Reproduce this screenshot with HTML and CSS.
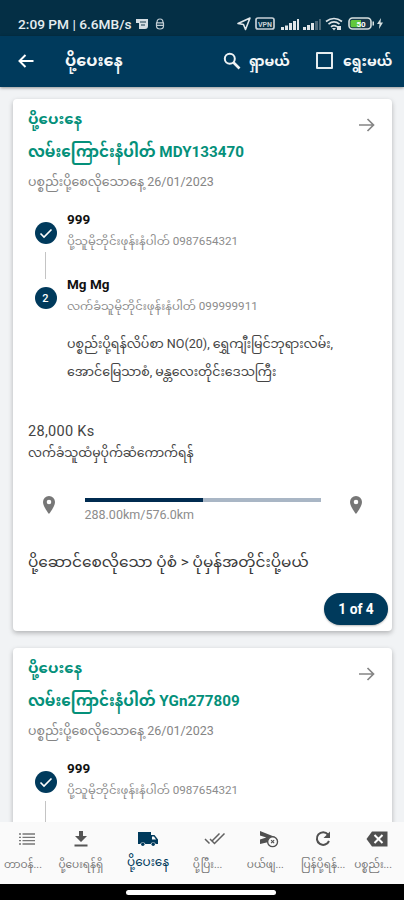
FILE: index.html
```html
<!DOCTYPE html>
<html lang="my">
<head>
<meta charset="utf-8">
<title>ပို့ပေးနေ</title>
<link rel="stylesheet" href="styles.css">
</head>
<body>
<div class="screen">
  <header class="status">
    <span class="clock">2:09 PM | 6.6MB/s</span>
    <svg class="st-note" width="12" height="11" viewBox="0 0 12 11"><path fill="#d5dde2" d="M0 0h12v7q0 3-3 3H3V4H0z"/><path d="M4 3h6M5 6h4" stroke="#17384a"/></svg>
    <svg class="st-bug" width="10" height="12" viewBox="0 0 10 12" fill="none" stroke="#c3ced5" stroke-width="1.2"><path d="M2 4.500q0-3.500 3-3.500t3 3.500M1 4.800h8M1.500 7.300h7M1.500 5v3q0 3 3.500 3t3.500-3V5"/></svg>
    <span class="grow"></span>
    <svg width="168" height="16" viewBox="0 0 168 16">
      <path d="M2 7.5 14 2 9.5 13.5 7.5 8.5z" fill="none" stroke="#e1e7ea" stroke-width="1.6" stroke-linejoin="round"/>
      <rect x="20" y="2" width="18" height="11" rx="2" fill="none" stroke="#c6d0d6" stroke-width="1.7"/>
      <text x="29" y="10.5" class="vpn" text-anchor="middle">VPN</text>
      <g fill="#dfe5e8"><path d="M45 11h3v3h-3zM49 9.500h3v4.500h-3zM53 7h3v7h-3zM57 5h3v9h-3zM61 3h2v11h-2z"/><path d="M67 11h3v3h-3zM71 9h3v5h-3zM75 7h3v7h-3z"/></g>
      <path fill="#4c6878" d="M79 5h3v9h-3zM83 3h2v11h-2z"/>
      <g fill="none" stroke="#dbe2e6" stroke-width="1.7"><path d="M90 5.500q8-6 16 0M92.500 8.200q5.500-4.500 11 0M95 10.800q3-2.400 6 0"/></g>
      <path fill="#dbe2e6" d="M98 14.500l-2-2.500h4zM101 10h4v4h-4z"/>
      <rect x="113" y="2" width="22" height="11" rx="3.500" fill="#17384a" stroke="#d6dfdf" stroke-width="1.600"/>
      <path fill="#61c93b" d="M116 4h9v7.200h-9q-1.500 0-1.500-1.500V5.500Q114.500 4 116 4z"/>
      <text x="125" y="10.500" class="bat" text-anchor="middle">50</text>
      <path fill="#d6dfdf" d="M136.500 5.500h1.500v4h-1.500zM145 2l-4 6h2.500l-.5 5 4-6.500h-2.500z"/>
    </svg>
  </header>
  <div class="appbar">
    <svg class="back" width="16" height="14" viewBox="0 0 16 14" fill="none" stroke="#fff" stroke-width="2"><path d="M15.500 7H2M7.500 1 1.500 7l6 6"/></svg>
    <h1>ပို့ပေးနေ</h1>
    <span class="grow"></span>
    <svg class="search" width="18" height="18" viewBox="0 0 18 18" fill="none" stroke="#eef3f5" stroke-width="2"><circle cx="6.800" cy="6.800" r="5"/><path stroke-width="2.600" d="m10.500 10.500 6 6"/></svg>
    <span class="act find">ရှာမယ်</span>
    <span class="box"></span>
    <span class="act pick">ရွေးမယ်</span>
  </div>

  <main class="list">
    <article class="card">
      <svg class="go" width="16" height="14" viewBox="0 0 16 14"><path d="M0 7h14M8.500 1l6 6-6 6"/></svg>
      <h2 class="state">ပို့ပေးနေ</h2>
      <h2 class="code">လမ်းကြောင်းနံပါတ် MDY133470</h2>
      <p class="date">ပစ္စည်းပို့စေလိုသောနေ့ 26/01/2023</p>
      <div class="steps">
        <div class="rail">
          <span class="dot"><svg width="14" height="11" viewBox="0 0 14 11"><path d="m1.500 5.500 3.500 3.500 7.500-7.500"/></svg></span>
          <span class="line"></span>
          <span class="dot">2</span>
        </div>
        <div class="people">
          <div class="person"><b>999</b><p>ပို့သူမိုဘိုင်းဖုန်းနံပါတ် 0987654321</p></div>
          <div class="person"><b>Mg Mg</b><p>လက်ခံသူမိုဘိုင်းဖုန်းနံပါတ် 099999911</p></div>
          <p class="addr">ပစ္စည်းပို့ရန်လိပ်စာ NO(20), ရွှေကျီးမြင်ဘုရားလမ်း,<br>အောင်မြေသာစံ, မန္တလေးတိုင်းဒေသကြီး</p>
        </div>
      </div>
      <p class="price">28,000 Ks</p>
      <p class="payer">လက်ခံသူထံမှပိုက်ဆံကောက်ရန်</p>
      <div class="track">
        <svg class="pin" width="12" height="18" viewBox="0 0 12 18"><path fill-rule="evenodd" d="M6 0a6 6 0 0 0-6 6c0 4.500 6 12 6 12s6-7.500 6-12a6 6 0 0 0-6-6zm0 3.700a2.300 2.300 0 1 1 0 4.600 2.300 2.300 0 0 1 0-4.600z"/></svg>
        <div class="progress"><div class="bar"><div class="fill" style="width:50%"></div></div><span>288.00km/576.0km</span></div>
        <svg class="pin" width="12" height="18" viewBox="0 0 12 18"><path fill-rule="evenodd" d="M6 0a6 6 0 0 0-6 6c0 4.500 6 12 6 12s6-7.500 6-12a6 6 0 0 0-6-6zm0 3.700a2.300 2.300 0 1 1 0 4.600 2.300 2.300 0 0 1 0-4.600z"/></svg>
      </div>
      <p class="mode">ပို့ဆောင်စေလိုသော ပုံစံ &gt; ပုံမှန်အတိုင်းပို့မယ်</p>
      <span class="count">1 of 4</span>
    </article>

    <article class="card">
      <svg class="go" width="16" height="14" viewBox="0 0 16 14"><path d="M0 7h14M8.500 1l6 6-6 6"/></svg>
      <h2 class="state">ပို့ပေးနေ</h2>
      <h2 class="code">လမ်းကြောင်းနံပါတ် YGn277809</h2>
      <p class="date">ပစ္စည်းပို့စေလိုသောနေ့ 26/01/2023</p>
      <div class="steps">
        <div class="rail">
          <span class="dot"><svg width="14" height="11" viewBox="0 0 14 11"><path d="m1.500 5.500 3.500 3.500 7.500-7.500"/></svg></span>
          <span class="line"></span>
        </div>
        <div class="people">
          <div class="person"><b>999</b><p>ပို့သူမိုဘိုင်းဖုန်းနံပါတ် 0987654321</p></div>
        </div>
      </div>
    </article>
  </main>

  <nav class="tabs">
    <div class="tab cut"><svg width="18" height="18" viewBox="0 0 18 18" stroke="#777" stroke-width="1.300"><path d="M1 4h2M1 7.300h2M1 10.600h2M1 14h2M4.500 4H17M4.500 7.300H17M4.500 10.600H17M4.500 14H17"/></svg><span>တာဝန်...</span></div>
    <div class="tab"><svg width="18" height="18" viewBox="0 0 18 18" fill="#555"><path d="M7 1h4v5h4l-6 6-6-6h4zM2.500 14.500h13v2h-13z"/></svg><span>ပို့ပေးရန်ရှိ</span></div>
    <div class="tab on"><svg width="22" height="18" viewBox="0 0 22 18"><path fill="#003a5c" d="M1 2h13v3h3.500L21 9.500V14h-2.200a2.800 2.800 0 0 0-5.200 0H8.400a2.800 2.800 0 0 0-5.200 0H1z"/><path fill="#fafafa" d="M15 6.500h2l2 3h-4z"/><circle cx="5.800" cy="14.300" r="1.700" fill="#003a5c"/><circle cx="16.200" cy="14.300" r="1.700" fill="#003a5c"/></svg><span>ပို့ပေးနေ</span></div>
    <div class="tab cut wide"><svg width="22" height="18" viewBox="0 0 22 18" fill="none" stroke="#606060" stroke-width="1.500"><path d="m1 9 4.500 4.500M6 9l4.500 4.500 10-10M8.500 10.500l7-7"/></svg><span>ပို့ပြီး...</span></div>
    <div class="tab cut"><svg width="22" height="20" viewBox="0 0 22 20"><path fill="#505050" d="M1 1 18.500 8l-7 1.500-2 4L1 15.500v-5L8 8.300 1 6z"/><circle cx="15" cy="13" r="5.500" fill="#fafafa" stroke="#505050" stroke-width="1.500"/><path d="m13.300 11.300 3.400 3.400m0-3.400-3.400 3.400" stroke="#505050" stroke-width="1.200"/></svg><span>ပယ်ဖျ...</span></div>
    <div class="tab"><svg width="18" height="18" viewBox="0 0 18 18"><path fill="none" stroke="#505050" stroke-width="2" d="M14 4.500A6.300 6.300 0 1 0 15 11"/><path fill="#505050" d="M16 1.500v6.500H9.500z"/></svg><span>ပြန်ပို့ရန်...</span></div>
    <div class="tab cut"><svg width="22" height="18" viewBox="0 0 22 18"><path fill="#505050" d="M6 1.500h15.500v15H6L.5 9z"/><path stroke="#fff" stroke-width="2" d="m8.500 5 8 8m0-8-8 8"/></svg><span>ပစ္စည်း...</span></div>
  </nav>
  <div class="gesture"><i></i></div>
</div>
</body>
</html>
```
FILE: styles.css
```css
* { box-sizing: border-box; }
body { margin: 0; }
h1, h2, p { margin: 0; font-weight: 400; }
svg { display: block; flex: none; }
.screen { width: 404px; height: 900px; display: flex; flex-direction: column; overflow: hidden; background: #f1f3f5; font-family: Roboto, "Noto Sans Myanmar", "Padauk", sans-serif; white-space: nowrap; }
.grow { flex: 1; }
.status { height: 36px; flex: none; display: flex; align-items: center; padding: 12px 0 0 18px; background: #042f45; color: #e6ecef; }
.clock { width: 115px; font-size: 13.700px; font-weight: 500; line-height: 20px; }
.st-note { margin-left: 3px; }
.st-bug { margin-left: 7px; }
.vpn { font: 700 7px Roboto, sans-serif; fill: #c6d0d6; }
.bat { font: 700 8px Roboto, sans-serif; fill: #fff; }
.appbar { height: 51px; flex: none; display: flex; align-items: center; padding: 0 13px 2px 18px; background: #003a5c; color: #f4f7f8; box-shadow: 0 1px 3px #0006; z-index: 2; }
h1 { margin-left: 31px; width: 58px; font-size: 16px; line-height: 24px; font-weight: 700; }
.act { font-size: 14px; line-height: 24px; font-weight: 700; }
.find { width: 40px; margin-left: 8px; }
.pick { width: 48px; margin-left: 10px; }
.box { width: 17px; height: 17px; margin-left: 27px; border: 2px solid #e5ecef; border-radius: 1px; }

.list { flex: 1; min-height: 0; overflow: hidden; display: flex; flex-direction: column; gap: 17px; padding: 12px 12px 0 13px; }
.card { position: relative; flex: none; height: 532px; padding: 7px 15px; background: #fff; border-radius: 4px; box-shadow: 0 2px 5px #0004; }
.go { position: absolute; right: 17px; top: 19px; fill: none; stroke: #858585; stroke-width: 1.7; }
.state, .code { color: #04907a; font-weight: 700; }
.state { font-size: 15px; line-height: 26px; }
.code { margin-top: 6px; font-size: 15.200px; line-height: 28px; }
.date { margin-top: 4px; font-size: 12.500px; line-height: 24px; color: #858585; }
.steps { display: flex; margin-top: 15px; }
.rail { width: 35px; display: flex; flex-direction: column; align-items: center; padding-top: 13px; flex: none; }
.dot { width: 22px; height: 22px; border-radius: 50%; background: #003a5c; color: #fff; display: flex; align-items: center; justify-content: center; font-size: 11px; font-weight: 500; }
.dot path { fill: none; stroke: #fff; stroke-width: 1.600; }
.line { width: 1px; height: 27px; margin: 8px 0; background: #c4c4c4; }
.people { margin-left: 4px; }
.person { height: 65px; }
.person b { display: block; font-size: 13.500px; line-height: 20px; font-weight: 700; color: #111; }
.person p { font-size: 11.650px; line-height: 24px; color: #8c8c8c; }
.addr { margin-top: -9px; font-size: 12.600px; line-height: 28px; color: #444; }
.price { margin-top: 36px; font-size: 14.500px; line-height: 20px; color: #444; letter-spacing: .3px; }
.payer { font-size: 12.400px; line-height: 21px; color: #444; }
.track { display: flex; margin-top: 33px; padding: 0 15px; justify-content: space-between; }
.pin { fill: #777; }
.progress { width: 236px; padding-top: 2px; }
.bar { height: 4px; background: #a9b6c5; }
.fill { height: 4px; background: #002b50; }
.progress span { display: block; font-size: 12.500px; line-height: 17px; margin-top: 4px; color: #8c8c8c; }
.mode { margin-top: 24px; font-size: 15.300px; line-height: 30px; color: #383838; }
.count { position: absolute; right: 4px; bottom: 6px; width: 64px; height: 32px; border-radius: 16px; background: #003a5c; color: #fff; text-align: center; font-size: 13.800px; font-weight: 700; line-height: 32px; box-shadow: 0 1px 2px #0004; }

.tabs { height: 62px; flex: none; display: flex; background: #fafafa; z-index: 2; }
.tab { flex: 54 1 0; min-width: 0; overflow: hidden; display: flex; flex-direction: column; align-items: center; padding-top: 8px; color: #777; font-size: 10.500px; }
.tab svg { height: 18px; }
.tab span { line-height: 24px; margin-top: 5px; }
.cut span { padding-right: 8px; }
.wide span { padding-right: 16px; }
.tab.on { flex-grow: 81; color: #003a5c; font-size: 12px; }
.tab.on span { margin-top: 2px; }
.gesture { height: 16px; flex: none; background: #000; display: flex; justify-content: center; padding: 6px 3px 0 0; }
.gesture i { width: 150px; height: 5px; border-radius: 3px; background: #fff; }
```
